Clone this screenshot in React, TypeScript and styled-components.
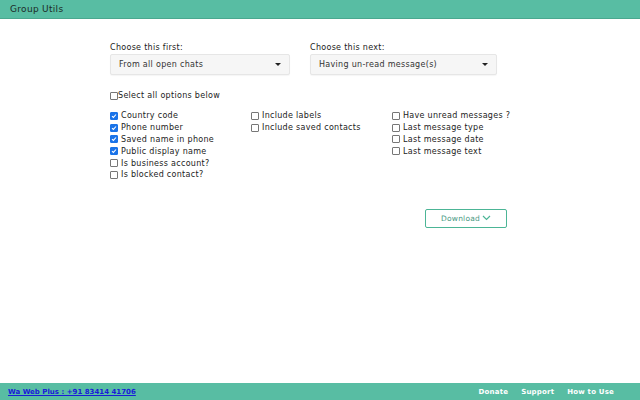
import styled, { createGlobalStyle } from "styled-components";

const GlobalStyle = createGlobalStyle`
  html, body { margin: 0; padding: 0; }
  body {
    font-family: "DejaVu Sans", "Liberation Sans", sans-serif;
    color: #222;
    background: #fff;
  }
`;

const Page = styled.div`
  width: 640px;
  height: 400px;
  display: flex;
  flex-direction: column;
  overflow: hidden;
`;

const Header = styled.header`
  height: 18px;
  background: #58bda3;
  border-bottom: 1px solid #4aa88f;
  display: flex;
  align-items: center;
  padding-left: 10px;
  font-size: 9px;
  letter-spacing: 0.3px;
  color: #1d2b27;
`;

const Main = styled.main`
  flex: 1;
  padding: 24px 0 0 110px;
  display: flex;
  flex-direction: column;
  letter-spacing: 0.3px;
`;

const SelectRow = styled.div`
  display: flex;
  gap: 20px;
`;

const Field = styled.div<{ $w: number }>`
  width: ${(p) => p.$w}px;
  display: flex;
  flex-direction: column;
  gap: 2px;
`;

const Label = styled.div`
  font-size: 8px;
  color: #222;
`;

const SelectBox = styled.div`
  height: 19px;
  background: #f6f6f6;
  border: 1px solid #e6e6e6;
  border-radius: 2px;
  display: flex;
  align-items: center;
  justify-content: space-between;
  padding: 0 8px;
  font-size: 8px;
  color: #333;
  box-shadow: 0 1px 1px rgba(0, 0, 0, 0.04);
`;

const Caret = styled.span`
  width: 0;
  height: 0;
  border-left: 3px solid transparent;
  border-right: 3px solid transparent;
  border-top: 3px solid #222;
`;

const SelectAll = styled.label`
  margin-top: 16px;
  display: flex;
  align-items: center;
  font-size: 8px;
`;

const Columns = styled.div`
  margin-top: 10px;
  display: grid;
  grid-template-columns: 141px 141px 141px;
`;

const Col = styled.div`
  display: flex;
  flex-direction: column;
`;

const Item = styled.label`
  display: flex;
  align-items: center;
  gap: 3px;
  height: 11.8px;
  font-size: 8px;
  color: #222;
  white-space: nowrap;
`;

const Box = styled.span<{ $on?: boolean }>`
  width: 6px;
  height: 6px;
  border: 1px solid ${(p) => (p.$on ? "#1a73e8" : "#777")};
  border-radius: 1px;
  background: ${(p) => (p.$on ? "#1a73e8" : "#fff")};
  display: flex;
  align-items: center;
  justify-content: center;
  flex: none;
`;

const DownloadWrap = styled.div`
  margin-top: 28px;
  padding-left: 315px;
`;

const DownloadBtn = styled.button`
  width: 82px;
  height: 19px;
  border: 1px solid #4cb596;
  border-radius: 2px;
  background: #fff;
  color: #4a9a84;
  font-family: inherit;
  font-size: 7.5px;
  letter-spacing: 0.2px;
  display: flex;
  align-items: center;
  justify-content: center;
  gap: 2px;
  padding: 0;
`;

const Footer = styled.footer`
  height: 17px;
  background: #58bda3;
  display: flex;
  align-items: center;
  justify-content: space-between;
  padding: 0 8px;
  font-size: 7px;
`;

const PhoneLink = styled.a`
  color: #1a1ad8;
  text-decoration: underline;
  font-weight: bold;
`;

const FooterNav = styled.nav`
  display: flex;
  gap: 13px;
  padding-right: 18px;
`;

const NavLink = styled.span`
  color: #fff;
  font-weight: bold;
  letter-spacing: 0.2px;
`;

const Check = ({ on, text }: { on?: boolean; text: string }) => (
  <Item>
    <Box $on={on}>
      {on && (
        <svg width="6" height="6" viewBox="0 0 6 6">
          <path d="M1 3.1 L2.4 4.4 L5 1.5" stroke="#fff" strokeWidth="1.1" fill="none" />
        </svg>
      )}
    </Box>
    {text}
  </Item>
);

export default function App() {
  return (
    <Page>
      <GlobalStyle />
      <Header>Group Utils</Header>
      <Main>
        <SelectRow>
          <Field $w={180}>
            <Label>Choose this first:</Label>
            <SelectBox>
              From all open chats
              <Caret />
            </SelectBox>
          </Field>
          <Field $w={187}>
            <Label>Choose this next:</Label>
            <SelectBox>
              Having un-read message(s)
              <Caret />
            </SelectBox>
          </Field>
        </SelectRow>
        <SelectAll>
          <Box />
          Select all options below
        </SelectAll>
        <Columns>
          <Col>
            <Check on text="Country code" />
            <Check on text="Phone number" />
            <Check on text="Saved name in phone" />
            <Check on text="Public display name" />
            <Check text="Is business account?" />
            <Check text="Is blocked contact?" />
          </Col>
          <Col>
            <Check text="Include labels" />
            <Check text="Include saved contacts" />
          </Col>
          <Col>
            <Check text="Have unread messages ?" />
            <Check text="Last message type" />
            <Check text="Last message date" />
            <Check text="Last message text" />
          </Col>
        </Columns>
        <DownloadWrap>
          <DownloadBtn>
            Download
            <svg width="9" height="6" viewBox="0 0 9 6">
              <path d="M1 1 L4.5 4.5 L8 1" stroke="#4cb596" strokeWidth="1.2" fill="none" />
            </svg>
          </DownloadBtn>
        </DownloadWrap>
      </Main>
      <Footer>
        <PhoneLink>Wa Web Plus : +91 83414 41706</PhoneLink>
        <FooterNav>
          <NavLink>Donate</NavLink>
          <NavLink>Support</NavLink>
          <NavLink>How to Use</NavLink>
        </FooterNav>
      </Footer>
    </Page>
  );
}
